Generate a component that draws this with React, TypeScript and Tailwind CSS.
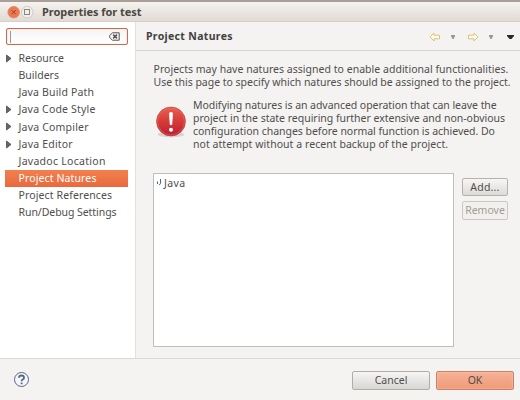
const tree = [
  { label: 'Resource', open: true, track: 'tracking-[0px]' },
  { label: 'Builders', track: 'tracking-[0px]' },
  { label: 'Java Build Path', track: 'tracking-[0.16px]' },
  { label: 'Java Code Style', open: true, track: 'tracking-[0.18px]' },
  { label: 'Java Compiler', open: true, track: 'tracking-[0.2px]' },
  { label: 'Java Editor', open: true, track: 'tracking-[0.2px]' },
  { label: 'Javadoc Location', track: 'tracking-[0.28px]' },
  { label: 'Project Natures', selected: true, track: 'tracking-[0.12px]' },
  { label: 'Project References', track: 'tracking-[0.12px]' },
  { label: 'Run/Debug Settings', track: 'tracking-[-0.06px]' },
];

function TitleBar() {
  return (
    <header className="flex h-[22px] shrink-0 items-center border-t-2 border-b border-t-[#a99f96] border-b-[#d9cfc7] bg-gradient-to-b from-[#f4f3ef] to-[#e2dad4] pl-[7px]">
      <svg width="28" height="14" viewBox="0 0 28 14" className="shrink-0">
        <circle cx="6.7" cy="7.2" r="5.8" fill="#ef7850" stroke="#d98a6c" strokeWidth=".8" />
        <path d="M4.6 5.1l4.2 4.2M8.8 5.1l-4.2 4.2" stroke="#8b4630" strokeWidth="1" />
        <circle cx="20.2" cy="7.2" r="5.8" fill="#f0eeea" stroke="#c9c3bc" strokeWidth=".8" />
        <rect x="17.5" y="4.5" width="5" height="5" fill="none" stroke="#8b867f" />
      </svg>
      <h1 className="ml-[7px] text-[11px] font-bold leading-[18px] tracking-[-0.05px] text-[#4b4843]">Properties for test</h1>
    </header>
  );
}

function Sidebar() {
  return (
    <aside className="w-[136px] shrink-0 border-r border-[#e3e1df] bg-white">
      <div className="ml-[6px] mt-[6px] flex h-[17px] w-[122px] items-center rounded-[2px] border border-[#cf6a4b] bg-gradient-to-b from-[#f4f4f4] to-white px-[3px] shadow-[inset_0_0_1px_#e9a18a]">
        <span className="h-[12px] w-px bg-[#999]" />
        <svg className="ml-auto mr-[4px]" width="11" height="9" viewBox="0 0 11 9" fill="none" stroke="#55534f">
          <path d="M3.5.8H10.2V8.2H3.5L.7 5.5V3.5Z" />
          <path d="M4.2 2.6L8 6.4M8 2.6L4.2 6.4" strokeWidth="1.5" />
        </svg>
      </div>
      <ul className="ml-[5px] mt-[5px] w-[123px]">
        {tree.map((n) => (
          <li
            key={n.label}
            className={
              'flex h-[17.1px] items-center text-[10.5px] ' +
              (n.selected ? 'bg-gradient-to-b from-[#f2804f] to-[#e9693d] text-white' : 'text-[#4f4e4c]')
            }
          >
            <span className="flex w-[13.5px] shrink-0">
              {n.open && (
                <svg width="7" height="9" viewBox="0 0 7 9">
                  <path d="M1.5 1L6 4.5L1.5 8Z" fill="#666" stroke="#4c4c4c" strokeWidth=".8" />
                </svg>
              )}
            </span>
            <span className={'whitespace-nowrap pt-px ' + n.track}>{n.label}</span>
          </li>
        ))}
      </ul>
    </aside>
  );
}

function Arrow({ flip }: { flip?: boolean }) {
  return (
    <svg width="12" height="10" viewBox="0 0 12 10" className={flip ? '-scale-x-100' : ''}>
      <path d="M1 5L5 1V3.2H10.5V6.8H5V9Z" fill="#fffbea" stroke="#dcc27a" strokeWidth="1" />
    </svg>
  );
}

function Caret({ color, w }: { color: string; w: number }) {
  return (
    <svg width={w} height="4" viewBox="0 0 7 4" preserveAspectRatio="none">
      <path d="M0 0H7V1L4.5 4H2.5L0 1Z" fill={color} />
    </svg>
  );
}

function WarningIcon() {
  return (
    <svg width="32" height="33" viewBox="0 0 32 33" className="shrink-0">
      <defs>
        <linearGradient id="red" x1="0" y1="0" x2="0" y2="1">
          <stop offset="0" stopColor="#e8604f" />
          <stop offset=".5" stopColor="#d63a38" />
          <stop offset="1" stopColor="#b91f35" />
        </linearGradient>
      </defs>
      <ellipse cx="16" cy="28.6" rx="13.5" ry="2.8" fill="#000" opacity=".12" />
      <circle cx="16" cy="15.5" r="14.4" fill="url(#red)" stroke="#c3423d" strokeWidth=".8" />
      <circle cx="16" cy="15.5" r="13.4" fill="none" stroke="#f08070" strokeWidth=".7" opacity=".6" />
      <path d="M14 7.5Q14 6 16 6T18 7.5L17.2 18.5Q16 19.8 14.8 18.5Z" fill="#fff" />
      <circle cx="16" cy="23.7" r="2" fill="#fff" />
    </svg>
  );
}

function Content() {
  return (
    <main className="flex min-w-0 flex-1 flex-col">
      <div className="flex h-[29px] shrink-0 items-center border-b border-[#d5d3d0] pl-[10px] pr-[6px]">
        <h2 className="text-[10.5px] font-bold leading-[14px] tracking-[0.33px] text-[#42413e]">Project Natures</h2>
        <div className="ml-auto flex items-center pt-[2px]">
          <Arrow />
          <span className="ml-[10px] flex"><Caret color="#9b9694" w={4} /></span>
          <span className="ml-[12px] flex"><Arrow flip /></span>
          <span className="ml-[10px] flex"><Caret color="#9b9694" w={4} /></span>
          <span className="ml-[14px] flex"><Caret color="#2f2431" w={7} /></span>
        </div>
      </div>
      <div className="pl-[17px]">
        <p className="ml-[0.5px] mt-[12px] whitespace-nowrap text-[10.5px] leading-[12.7px]">
          <span className="block tracking-[0.025px]">Projects may have natures assigned to enable additional functionalities.</span>
          <span className="block tracking-[-0.02px]">Use this page to specify which natures should be assigned to the project.</span>
        </p>
        <div className="mt-[11px] flex">
          <span className="ml-[2px] mt-[7px] flex"><WarningIcon /></span>
          <p className="ml-[6px] whitespace-nowrap text-[10.5px] leading-[12.7px]">
            <span className="block tracking-[-0.055px]">Modifying natures is an advanced operation that can leave the</span>
            <span className="block tracking-[-0.02px]">project in the state requiring further extensive and non-obvious</span>
            <span className="block tracking-[-0.035px]">configuration changes before normal function is achieved. Do</span>
            <span className="block tracking-[0.055px]">not attempt without a recent backup of the project.</span>
          </p>
        </div>
        <div className="mt-[22.8px] flex">
          <div className="flex h-[174px] w-[301px] items-start border border-[#c1bfba] bg-white pl-[3px] pt-[1px]">
            <svg width="4" height="7" viewBox="0 0 4 7" className="mt-[4px]">
              <path d="M3.5 0V4.5Q3.5 5.5 2 5.5M.5 2.5V5" fill="none" stroke="#47698f" strokeWidth="1" />
            </svg>
            <span className="ml-[3px] text-[10.5px] leading-[16px] tracking-[0.4px]">Java</span>
          </div>
          <div className="ml-[8px] mt-[5px] flex w-[46px] flex-col gap-[5px] text-[10.5px]">
            <button className="h-[18px] rounded-[2px] border border-[#b5b2ae] bg-gradient-to-b from-[#f7f6f5] to-[#dddbd8] leading-[16px] tracking-[0.2px]">Add...</button>
            <button className="h-[19px] rounded-[2px] border border-[#cbc8c4] bg-[#f1f0ee] leading-[17px] text-[#a39c94]">Remove</button>
          </div>
        </div>
      </div>
    </main>
  );
}

function Footer() {
  return (
    <footer className="flex h-[42px] shrink-0 items-center border-t border-[#dad8d6] pl-[13px] pr-[6px]">
      <svg width="17" height="17" viewBox="0 0 17 17" fill="none" stroke="#586781">
        <circle cx="8.5" cy="8.5" r="7" fill="#f3f6fb" />
        <path d="M6 6.8Q6 4.5 8.5 4.5T11 6.7Q11 8 9.6 8.5Q8.6 9 8.6 10.3M8.6 11.4V13.2" strokeWidth="1.8" />
      </svg>
      <div className="ml-auto mt-[2px] flex gap-[6px] text-[10.5px]">
        <button className="h-[19px] w-[78px] rounded-[2px] border border-[#b1aeaa] bg-gradient-to-b from-[#f6f5f4] to-[#d9d7d4] leading-[17px]">Cancel</button>
        <button className="h-[19px] w-[78px] rounded-[2px] border border-[#c78369] bg-gradient-to-b from-[#f6b196] to-[#f09a78] leading-[17px] shadow-[inset_0_0_2px_#ffd0bc]">OK</button>
      </div>
    </footer>
  );
}

export default function App() {
  return (
    <div className="flex h-[400px] w-[520px] flex-col overflow-hidden bg-[#f4f3f2] font-['Noto_Sans','Open_Sans',sans-serif] text-[#4f4e4c]">
      <TitleBar />
      <div className="flex min-h-0 flex-1">
        <Sidebar />
        <Content />
      </div>
      <Footer />
    </div>
  );
}
